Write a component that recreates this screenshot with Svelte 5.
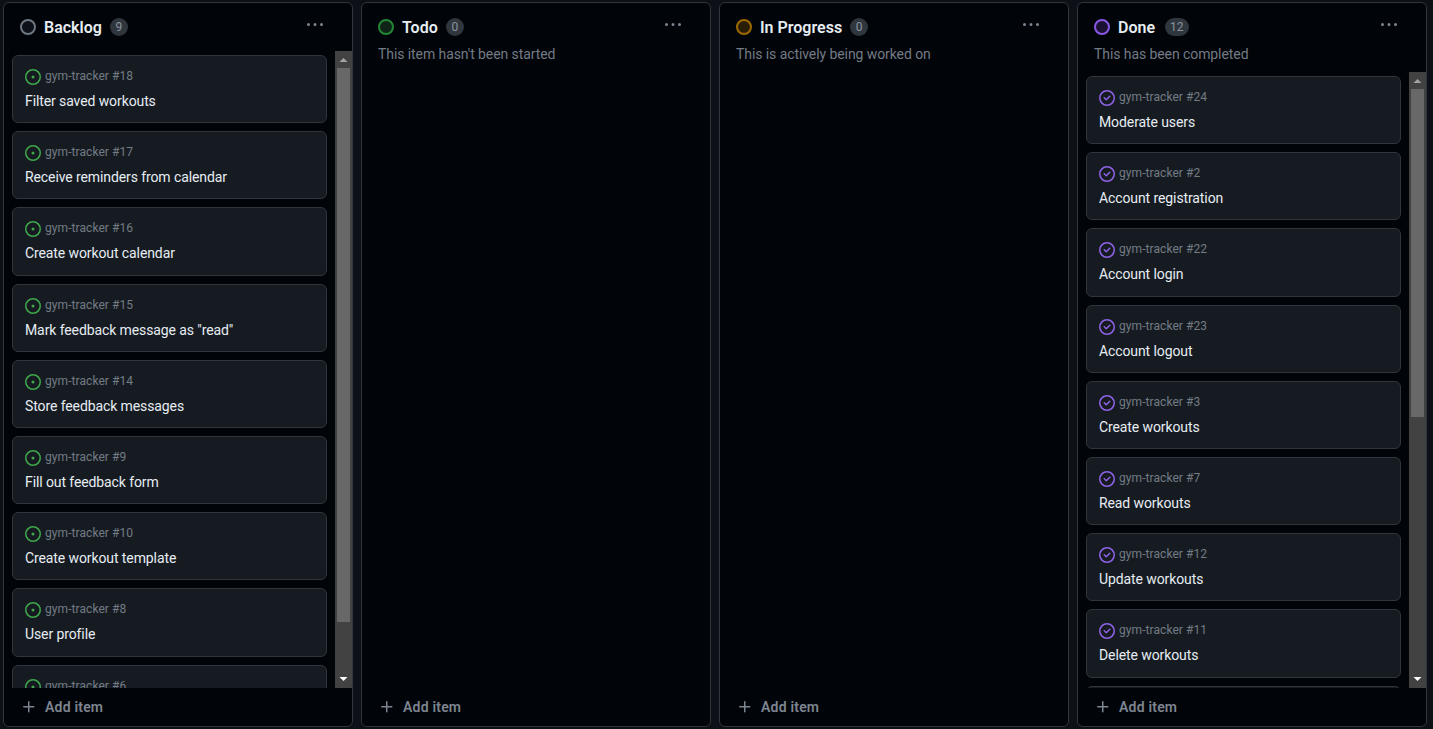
<script>
  const columns = [
    {
      name: "Backlog",
      count: 9,
      tone: "gray",
      thumb: 554,
      items: [
        [18, "Filter saved workouts"],
        [17, "Receive reminders from calendar"],
        [16, "Create workout calendar"],
        [15, 'Mark feedback message as "read"'],
        [14, "Store feedback messages"],
        [9, "Fill out feedback form"],
        [10, "Create workout template"],
        [8, "User profile"],
        [6, "Share workouts"]
      ]
    },
    { name: "Todo", count: 0, tone: "green", desc: "This item hasn't been started", items: [] },
    { name: "In Progress", count: 0, tone: "yellow", desc: "This is actively being worked on", items: [] },
    {
      name: "Done",
      count: 12,
      tone: "purple",
      thumb: 328,
      desc: "This has been completed",
      items: [
        [24, "Moderate users"],
        [2, "Account registration"],
        [22, "Account login"],
        [23, "Account logout"],
        [3, "Create workouts"],
        [7, "Read workouts"],
        [12, "Update workouts"],
        [11, "Delete workouts"],
        [4, "Search workouts"],
        [5, "View exercises"],
        [13, "Contact page"],
        [1, "Project setup"]
      ]
    }
  ];
</script>

<main class="board">
  {#each columns as col}
    <section class="column {col.tone}">
      <header class:described={col.desc}>
        <div class="heading">
          <span class="dot"></span>
          <h2>{col.name}</h2>
          <span class="count">{col.count}</span>
          <svg class="menu" viewBox="0 0 16 16" width="16" height="16" fill="currentColor">
            <path d="M8 9a1.5 1.5 0 1 0 0-3 1.5 1.5 0 0 0 0 3ZM1.5 9a1.5 1.5 0 1 0 0-3 1.5 1.5 0 0 0 0 3Zm13 0a1.5 1.5 0 1 0 0-3 1.5 1.5 0 0 0 0 3Z" />
          </svg>
        </div>
        {#if col.desc}
          <p class="desc">{col.desc}</p>
        {/if}
      </header>

      <div class="body">
        {#if col.items.length}
          <div class="list">
            {#each col.items as [num, title]}
              <article class="card">
                <div class="meta">
                  {#if col.tone === "purple"}
                    <svg class="closed" viewBox="0 0 16 16" width="16" height="16" fill="currentColor">
                      <path d="M11.28 6.78a.75.75 0 0 0-1.06-1.06L7.25 8.69 5.78 7.22a.75.75 0 0 0-1.06 1.06l2 2a.75.75 0 0 0 1.06 0l3.5-3.5Z" />
                      <path d="M16 8A8 8 0 1 1 0 8a8 8 0 0 1 16 0Zm-1.5 0a6.5 6.5 0 1 0-13 0 6.5 6.5 0 0 0 13 0Z" />
                    </svg>
                  {:else}
                    <svg class="open" viewBox="0 0 16 16" width="16" height="16" fill="currentColor">
                      <path d="M8 9.5a1.5 1.5 0 1 0 0-3 1.5 1.5 0 0 0 0 3Z" />
                      <path d="M8 0a8 8 0 1 1 0 16A8 8 0 0 1 8 0ZM1.5 8a6.5 6.5 0 1 0 13 0 6.5 6.5 0 0 0-13 0Z" />
                    </svg>
                  {/if}
                  <span>gym-tracker #{num}</span>
                </div>
                <div class="title">{title}</div>
              </article>
            {/each}
          </div>

          <!-- page scrollbars don't paint in the capture, so the bar is drawn -->
          <div class="scrollbar">
            <svg class="arrow" viewBox="0 0 17 17" width="17" height="17">
              <path d="M4.5 11L8.5 7L12.5 11Z" fill="#a3a3a3" />
            </svg>
            <div class="track">
              <div class="thumb" style="height: {col.thumb}px"></div>
            </div>
            <svg class="arrow" viewBox="0 0 17 17" width="17" height="17">
              <path d="M4.5 6L8.5 10L12.5 6Z" fill="#ffffff" />
            </svg>
          </div>
        {/if}
      </div>

      <footer>
        <svg viewBox="0 0 16 16" width="16" height="16" fill="currentColor">
          <path d="M7.75 2a.75.75 0 0 1 .75.75V7h4.25a.75.75 0 0 1 0 1.5H8.5v4.25a.75.75 0 0 1-1.5 0V8.5H2.75a.75.75 0 0 1 0-1.5H7V2.75A.75.75 0 0 1 7.75 2Z" />
        </svg>
        <span>Add item</span>
      </footer>
    </section>
  {/each}
</main>

<style>
  :global(body) {
    background: #0d1117;
    overflow: hidden;
  }

  .board {
    display: flex;
    gap: 8px;
    height: 729px;
    box-sizing: border-box;
    padding: 2px 6px 2px 3px;
    font-family: Roboto, sans-serif;
    font-size: 14px;
  }

  .column {
    display: flex;
    flex-direction: column;
    width: 350px;
    box-sizing: border-box;
    background: #010409;
    border: 1px solid #30363d;
    border-radius: 6px;
    overflow: hidden;
  }

  header {
    flex: none;
    height: 48px;
    box-sizing: border-box;
    padding: 15px 16px 0;
  }

  header.described {
    height: 69px;
  }

  .heading {
    display: flex;
    align-items: center;
    height: 18px;
  }

  .dot {
    width: 12px;
    height: 12px;
    border: 2px solid;
    border-radius: 50%;
  }

  .gray .dot { border-color: #6e7681; background: #0d1117; }
  .green .dot { border-color: #238636; background: #0f2417; }
  .yellow .dot { border-color: #9e6a03; background: #2a1d05; }
  .purple .dot { border-color: #8957e5; background: #1b1233; }

  h2 {
    margin: 1px 0 0 8px;
    font-size: 16px;
    line-height: 18px;
    font-weight: 600;
    color: #e6edf3;
  }

  .count {
    margin-left: 8px;
    min-width: 18px;
    height: 18px;
    line-height: 18px;
    padding: 0 1px;
    box-sizing: border-box;
    border-radius: 9px;
    background: #30363d;
    color: #8b949e;
    font-size: 12px;
    text-align: center;
  }

  .purple .count {
    margin-left: 10px;
    padding: 0 5px;
  }

  .menu {
    margin-left: auto;
    margin-right: 13px;
    margin-top: -5px;
    color: #7d8590;
  }

  .desc {
    margin: 8px 0 0;
    line-height: 20px;
    letter-spacing: -0.08px;
    color: #737b85;
  }

  .body {
    flex: 1;
    min-height: 0;
    display: flex;
  }

  .list {
    flex: 1;
    min-width: 0;
    display: flex;
    flex-direction: column;
    gap: 8px;
    padding: 4px 8px 0;
    overflow: hidden;
  }

  .scrollbar {
    flex: none;
    width: 17px;
    display: flex;
    flex-direction: column;
    background: #424242;
  }

  .arrow {
    flex: none;
    display: block;
  }

  .track {
    flex: 1;
    min-height: 0;
  }

  .thumb {
    margin: 0 2px;
    background: #686868;
  }

  .card {
    flex: none;
    box-sizing: border-box;
    height: 68.2px;
    padding: 12px 12px 0;
    background: #161b22;
    border: 1px solid #30363d;
    border-radius: 6px;
  }

  .meta {
    display: flex;
    align-items: center;
    gap: 4px;
    height: 18px;
    font-size: 12px;
    line-height: 16px;
    letter-spacing: 0.07px;
    color: #737b85;
  }

  .meta span {
    margin-top: -2px;
  }

  .open { color: #3fa84c; }
  .closed { color: #8f63e8; }

  .title {
    margin-top: 5px;
    line-height: 20px;
    letter-spacing: -0.1px;
    color: #e6edf3;
  }

  footer {
    flex: none;
    display: flex;
    align-items: center;
    gap: 8px;
    height: 38px;
    padding-left: 17px;
    line-height: 20px;
    letter-spacing: 0.2px;
    color: #7d8590;
    font-weight: 600;
  }
</style>
